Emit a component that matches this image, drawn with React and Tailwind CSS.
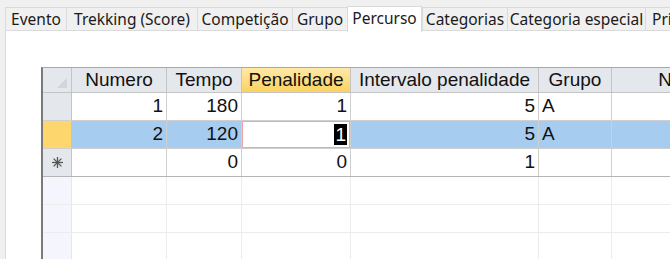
import React from 'react'

const tabs = ['Evento', 'Trekking (Score)', 'Competição', 'Grupo', 'Percurso', 'Categorias', 'Categoria especial', 'Prin']
const tabWidths = ['w-[61px]', 'w-[131px]', 'w-[95px]', 'w-[55px]', 'w-[75px]', 'w-[85px]', 'w-[138px]', 'w-[60px]']

const cols = [
  { label: 'Numero', w: 'w-[95px]' },
  { label: 'Tempo', w: 'w-[75px]' },
  { label: 'Penalidade', w: 'w-[109px]' },
  { label: 'Intervalo penalidade', w: 'w-[188px]' },
  { label: 'Grupo', w: 'w-[73px]' },
  { label: 'Nome', w: 'w-[144px]' },
]

const rows = [
  ['1', '180', '1', '5', 'A', ''],
  ['2', '120', '1', '5', 'A', ''],
  ['', '0', '0', '1', '', ''],
]

function Asterisk() {
  return (
    <svg width="11" height="11" viewBox="0 0 11 11" className="text-[#555]">
      <g stroke="currentColor" strokeWidth="1.3">
        <line x1="5.5" y1="0" x2="5.5" y2="11" />
        <line x1="0" y1="5.5" x2="11" y2="5.5" />
        <line x1="1.6" y1="1.6" x2="9.4" y2="9.4" />
        <line x1="9.4" y1="1.6" x2="1.6" y2="9.4" />
      </g>
    </svg>
  )
}

export default function App() {
  return (
    <div className="w-[670px] h-[259px] overflow-hidden bg-[#f0f0f0] font-['Noto_Sans',sans-serif]">
      {/* tab strip */}
      <div className="flex items-end h-[31px] pl-[5px]">
        {tabs.map((t, i) => {
          const active = t === 'Percurso'
          const last = i === tabs.length - 1
          return (
            <div
              key={t}
              className={
                'shrink-0 flex items-center text-[15.5px] leading-none text-[#1a1a1a] border-l border-t border-[#dadada] whitespace-nowrap overflow-hidden ' +
                tabWidths[i] + ' ' +
                (last ? 'justify-start pl-[6px] ' : 'justify-center ') +
                (active ? 'h-[26px] bg-white pb-[2px] relative top-px border-r' : 'h-[24px] bg-[#f0f0f0] border-b pt-px')
              }
            >
              {t}
            </div>
          )
        })}
      </div>

      {/* page body */}
      <div className="bg-white ml-[5px] border-l border-[#dadada] h-[228px] pt-[36px] pl-[35px]">
        <div className="border-l-2 border-t border-[#7a7a7a] border-t-[#a8a8a8] text-[19px] font-['Liberation_Sans',sans-serif] text-[#111]">
          {/* header */}
          <div className="flex h-[25px] border-b border-[#c4c4c4]">
            <div className="w-[29px] shrink-0 bg-[#e4e7eb] border-r border-[#c4c4c4] relative">
              <svg width="10" height="10" viewBox="0 0 10 10" className="absolute right-[4px] bottom-[4px]">
                <path d="M10 0 L10 10 L0 10 Z" fill="#d3d5d9" />
              </svg>
            </div>
            {cols.map((c) => (
              <div
                key={c.label}
                className={
                  'shrink-0 flex items-center justify-center border-r border-[#c4c4c4] whitespace-nowrap ' + c.w + ' ' +
                  (c.label === 'Penalidade' ? 'bg-gradient-to-b from-[#fee9a6] to-[#fbd25d]' : 'bg-[#e4e7eb]')
                }
              >
                {c.label}
              </div>
            ))}
          </div>

          {/* data rows */}
          {rows.map((r, ri) => {
            const sel = ri === 1
            const isNew = ri === 2
            return (
              <div
                key={ri}
                className={'flex h-[28px] border-b ' + (isNew ? 'border-[#b4b4b4]' : 'border-[#cfcfcf]')}
              >
                <div
                  className={
                    'w-[29px] shrink-0 border-r border-[#c4c4c4] flex items-center justify-center ' +
                    (sel ? 'bg-[#fdd66d]' : 'bg-[#e4e7eb]')
                  }
                >
                  {isNew && <Asterisk />}
                </div>
                {cols.map((c, ci) => {
                  const current = sel && ci === 2
                  const left = ci === 4
                  return (
                    <div
                      key={c.label}
                      className={
                        'shrink-0 flex items-center border-r border-[#cfcfcf] ' + c.w + ' ' +
                        (left ? 'justify-start pl-[3px] ' : 'justify-end pr-[3px] ') +
                        (current
                          ? 'bg-white shadow-[inset_0_0_0_1px_#f2a3a3]'
                          : sel
                          ? 'bg-[#a6cdef]'
                          : 'bg-white')
                      }
                    >
                      {current ? (
                        <span className="bg-black text-white leading-[21px] px-px">{r[ci]}</span>
                      ) : (
                        r[ci]
                      )}
                    </div>
                  )
                })}
              </div>
            )
          })}

          {/* empty rows */}
          {[0, 1, 2].map((k) => (
            <div key={k} className="flex h-[28px] border-b border-[#ececec]">
              <div className="w-[29px] shrink-0 bg-[#f4f5fd] border-r border-[#e6e6ee]" />
              {cols.map((c) => (
                <div key={c.label} className={'shrink-0 border-r border-[#ececec] ' + c.w} />
              ))}
            </div>
          ))}
        </div>
      </div>
    </div>
  )
}
